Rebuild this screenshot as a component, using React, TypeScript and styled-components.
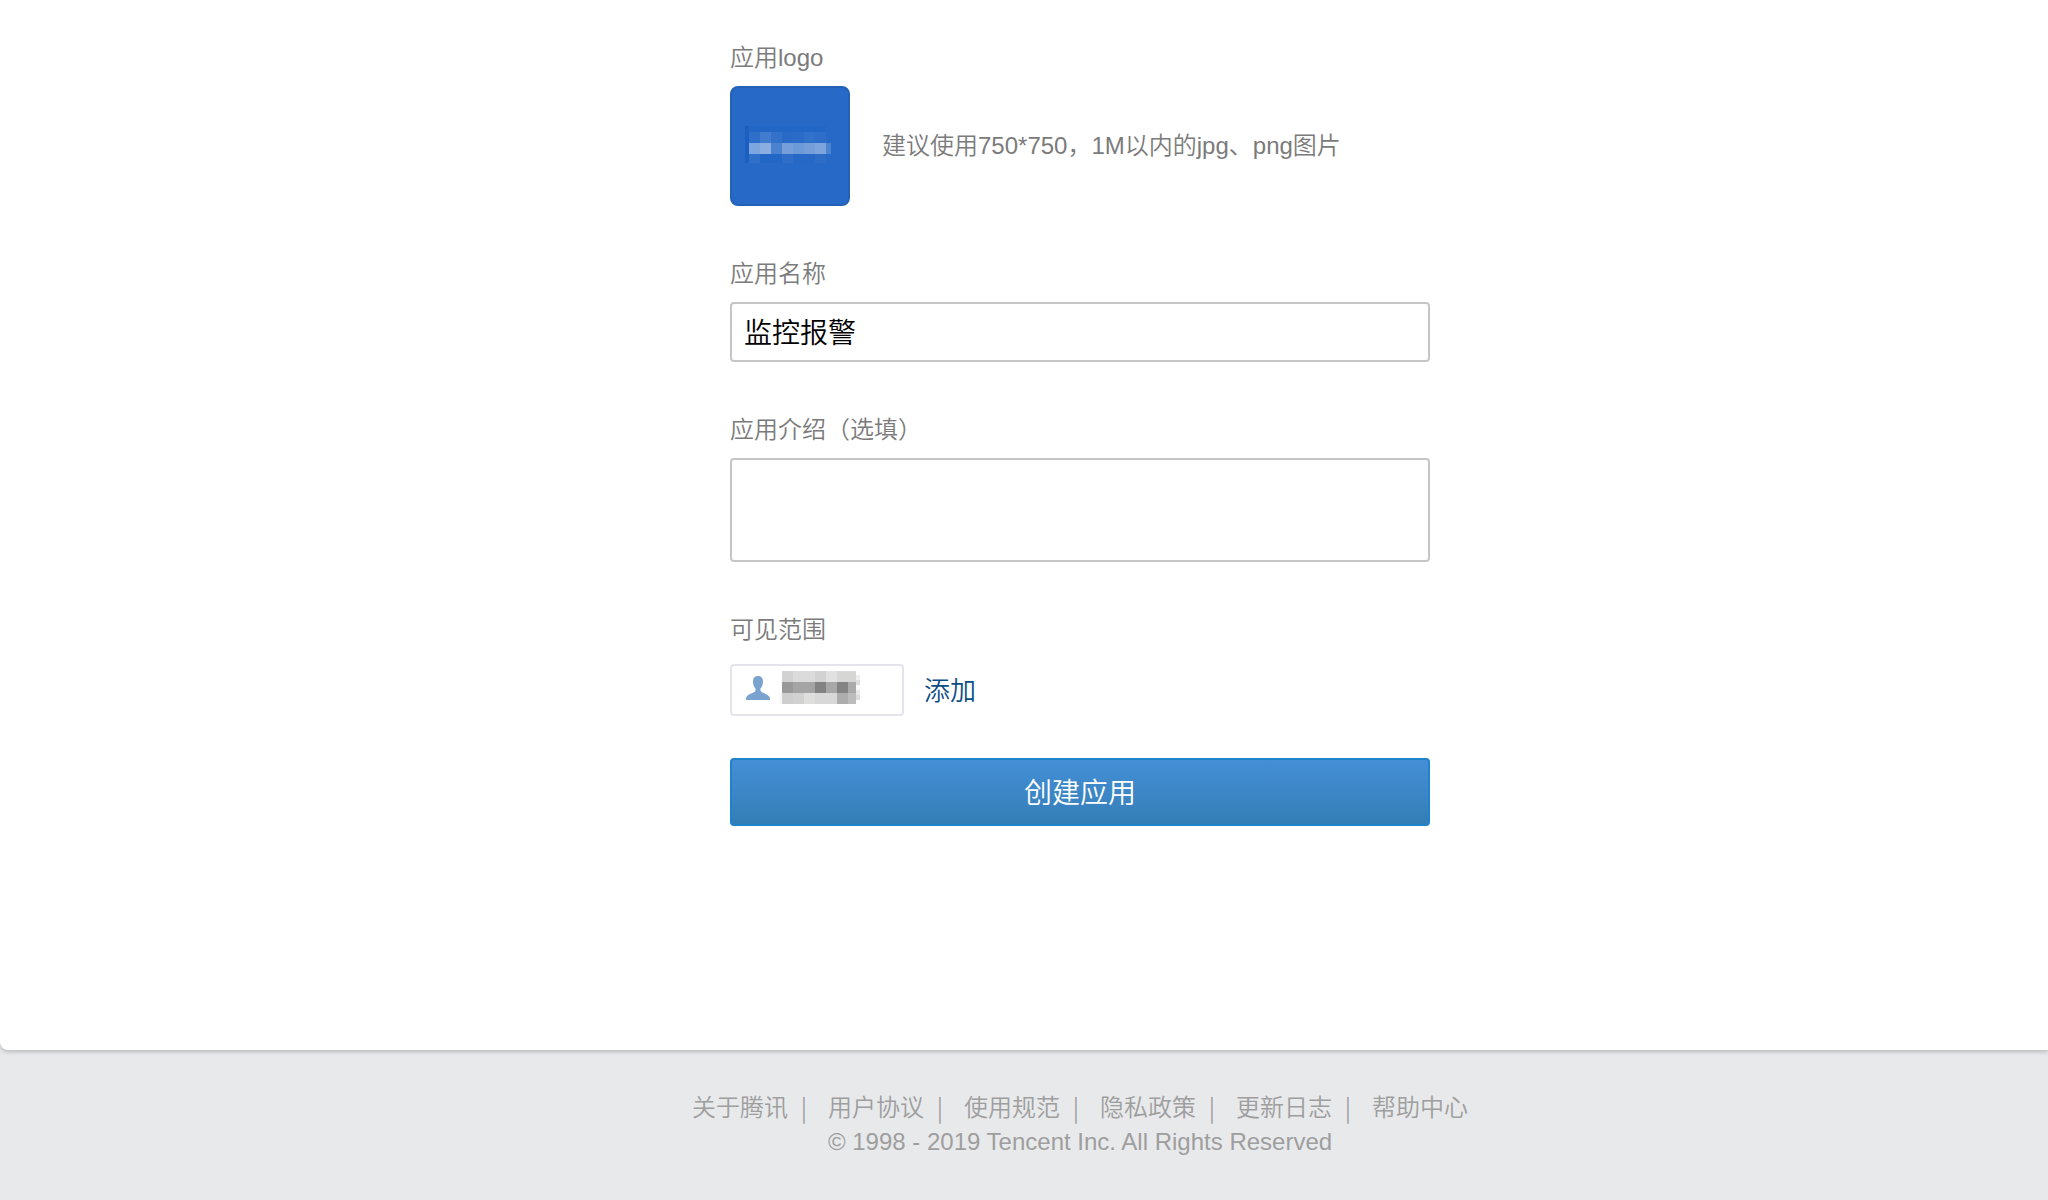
import React, { useState } from "react";
import styled, { createGlobalStyle } from "styled-components";

const GlobalStyle = createGlobalStyle`
  *, *::before, *::after { box-sizing: border-box; }
  body {
    margin: 0;
    background: #e8e9eb;
    color: #7b7b7b;
    font-family: "Liberation Sans", "Noto Sans CJK SC", sans-serif;
    font-size: 24px;
    font-weight: 350;
    line-height: 36px;
  }
  button, input, textarea { font-family: inherit; font-weight: inherit; }
`;

const Page = styled.div`
  min-height: 100vh;
  display: flex;
  flex-direction: column;
`;

const Card = styled.main`
  display: flex;
  justify-content: center;
  padding: 40px 0 224px 112px;
  background: #fff;
  border-bottom-left-radius: 8px;
  box-shadow: 0 2px 4px rgba(0, 0, 0, 0.2);
`;

const Form = styled.form`
  width: 700px;
  display: flex;
  flex-direction: column;
`;

const Field = styled.div<{ $gap?: number; $after?: number }>`
  display: flex;
  flex-direction: column;
  gap: ${(p) => p.$gap ?? 10}px;
  margin-bottom: ${(p) => p.$after ?? 50}px;
`;

const Label = styled.label`
  display: block;
`;

const Row = styled.div<{ $gap: number }>`
  display: flex;
  align-items: center;
  gap: ${(p) => p.$gap}px;
`;

const LogoButton = styled.button`
  width: 120px;
  height: 120px;
  padding: 0;
  border: 2px solid #2561b6;
  border-radius: 8px;
  background: #2769c6;
  overflow: hidden;
  cursor: pointer;

  svg { display: block; }
`;

const TextInput = styled.input`
  width: 100%;
  height: 60px;
  padding: 0 12px 2px;
  border: 2px solid #c5c5c5;
  border-radius: 4px;
  background: #fff;
  color: #000;
  font-size: 28px;
  outline: none;
`;

const TextArea = styled.textarea`
  display: block;
  width: 100%;
  height: 104px;
  padding: 10px 12px;
  border: 2px solid #c5c5c5;
  border-radius: 4px;
  background: #fff;
  color: #000;
  font-size: 28px;
  resize: none;
  outline: none;
`;

const Chip = styled.div`
  display: flex;
  align-items: center;
  gap: 8px;
  width: 174px;
  height: 52px;
  padding: 0 14px 4px;
  border: 2px solid #e4e4ea;
  border-radius: 4px;

  svg { display: block; flex: none; }
`;

const AddLink = styled.a`
  padding-top: 2px;
  color: #0c4d86;
  font-size: 26px;
  text-decoration: none;
`;

const Submit = styled.button`
  width: 100%;
  height: 68px;
  padding: 0 0 2px;
  border: 2px solid #2083cc;
  border-radius: 4px;
  background: linear-gradient(#448fd6, #347eb7);
  color: #fff;
  font-size: 28px;
  cursor: pointer;
`;

const Footer = styled.footer`
  display: flex;
  flex-direction: column;
  align-items: center;
  padding: 41px 0 41px 112px;
  color: #9e9e9e;
  line-height: 34px;
`;

const FooterLinks = styled.nav`
  display: flex;
  white-space: nowrap;
`;

const FooterLink = styled.a`
  color: inherit;
  text-decoration: none;
`;

const Divider = styled.span`
  width: 8px;
  margin: 0 20px 0 12px;
  font-family: "Noto Sans CJK SC", sans-serif;
  line-height: 32px;
  text-align: center;
`;

type Cell = [x: number, y: number, w: number, h: number, fill: string];

const logoCells: Cell[] = [
  [13, 38, 4, 37, "#1b60c1"],
  [17, 38, 77, 6, "#2367c6"],
  [17, 44, 11, 11, "#2f6fca"],
  [28, 44, 11, 11, "#417cce"],
  [39, 44, 11, 11, "#3471ca"],
  [50, 44, 11, 11, "#286ac6"],
  [61, 44, 11, 11, "#2c6cc8"],
  [72, 44, 11, 11, "#3271ca"],
  [83, 44, 11, 11, "#2e6ec8"],
  [17, 55, 11, 11, "#7ea6de"],
  [28, 55, 11, 11, "#8bade0"],
  [39, 55, 11, 11, "#4a82d0"],
  [50, 55, 11, 11, "#769fda"],
  [61, 55, 11, 11, "#6c99d7"],
  [72, 55, 11, 11, "#769fda"],
  [83, 55, 11, 11, "#7da4dc"],
  [94, 55, 5, 11, "#4b84d0"],
  [17, 66, 11, 9, "#3070c9"],
  [28, 66, 22, 9, "#2367c6"],
  [50, 66, 11, 9, "#2e6ec8"],
  [61, 66, 22, 9, "#2568c5"],
  [83, 66, 11, 9, "#2d6dc8"],
];

const nameCells: Cell[] = [
  [4, 0, 11, 11, "#d2d2d2"],
  [15, 0, 22, 11, "#dbdbdb"],
  [37, 0, 11, 11, "#d2d2d2"],
  [48, 0, 11, 11, "#e1e1e1"],
  [59, 0, 19, 11, "#d6d6d5"],
  [4, 11, 11, 11, "#999999"],
  [15, 11, 22, 11, "#a4a4a4"],
  [37, 11, 11, 11, "#828282"],
  [48, 11, 11, 11, "#a7a7a7"],
  [59, 11, 11, 11, "#838383"],
  [70, 11, 8, 11, "#aaaaaa"],
  [4, 22, 11, 11, "#cecece"],
  [15, 22, 11, 11, "#d1d1d1"],
  [26, 22, 11, 11, "#dededc"],
  [37, 22, 22, 11, "#d8d8d8"],
  [59, 22, 11, 11, "#adadad"],
  [70, 22, 8, 11, "#bcbcbc"],
  [1, 22, 3, 11, "#f7f7f7"],
  [78, 4, 4, 5, "#eeeeee"],
  [78, 9, 4, 5, "#dedede"],
  [78, 14, 4, 5, "#fafafa"],
  [78, 19, 4, 5, "#e8e8e8"],
  [78, 24, 4, 5, "#dcdcdc"],
];

const Mosaic = ({ cells, width, height }: { cells: Cell[]; width: number; height: number }) => (
  <svg
    width={width}
    height={height}
    viewBox={`0 0 ${width} ${height}`}
    shapeRendering="crispEdges"
    aria-hidden="true"
  >
    {cells.map(([x, y, w, h, fill], i) => (
      <rect key={i} x={x} y={y} width={w} height={h} fill={fill} />
    ))}
  </svg>
);

const PersonIcon = () => (
  <svg width="24" height="24" viewBox="0 0 24 24" aria-hidden="true">
    <path
      fill="#7ba3d0"
      d="M12 0C8.700 0 7 2.200 7 5.500C7 8.500 8 11 9.500 12.500C9.800 13.800 9.600 15 8.800 15.700C6.500 17.300 1 18.300 0 22V24H24V22C23 18.300 17.500 17.300 15.200 15.700C14.400 15 14.200 13.800 14.500 12.500C16 11 17 8.500 17 5.500C17 2.200 15.300 0 12 0Z"
    />
  </svg>
);

const footerLinks = ["关于腾讯", "用户协议", "使用规范", "隐私政策", "更新日志", "帮助中心"];

export default function App() {
  const [name, setName] = useState("监控报警");
  const [intro, setIntro] = useState("");

  return (
    <>
      <GlobalStyle />
      <Page>
        <Card>
          <Form onSubmit={(e) => e.preventDefault()}>
            <Field>
              <Label htmlFor="app-logo">应用logo</Label>
              <Row $gap={32}>
                <LogoButton id="app-logo" type="button">
                  <Mosaic cells={logoCells} width={116} height={116} />
                </LogoButton>
                <span>建议使用750*750，1M以内的jpg、png图片</span>
              </Row>
            </Field>
            <Field>
              <Label htmlFor="app-name">应用名称</Label>
              <TextInput id="app-name" value={name} onChange={(e) => setName(e.target.value)} />
            </Field>
            <Field>
              <Label htmlFor="app-intro">应用介绍（选填）</Label>
              <TextArea id="app-intro" value={intro} onChange={(e) => setIntro(e.target.value)} />
            </Field>
            <Field $gap={16} $after={42}>
              <span>可见范围</span>
              <Row $gap={20}>
                <Chip>
                  <PersonIcon />
                  <Mosaic cells={nameCells} width={82} height={34} />
                </Chip>
                <AddLink href="#add">添加</AddLink>
              </Row>
            </Field>
            <Submit type="submit">创建应用</Submit>
          </Form>
        </Card>
        <Footer>
          <FooterLinks>
            {footerLinks.map((text, i) => (
              <React.Fragment key={text}>
                {i > 0 && <Divider>|</Divider>}
                <FooterLink href="#">{text}</FooterLink>
              </React.Fragment>
            ))}
          </FooterLinks>
          <span>© 1998 - 2019 Tencent Inc. All Rights Reserved</span>
        </Footer>
      </Page>
    </>
  );
}
